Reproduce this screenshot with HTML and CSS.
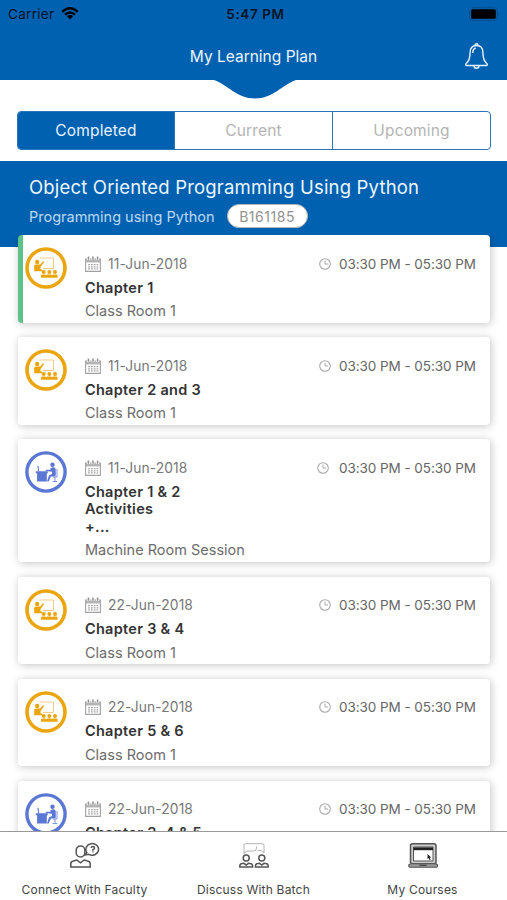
FILE: index.html
```html
<!DOCTYPE html>
<html lang="en">
<head>
<meta charset="utf-8">
<title>My Learning Plan</title>
<link rel="stylesheet" href="styles.css">
</head>
<body>
<svg class="sprite" aria-hidden="true">
  <symbol id="calendar" viewBox="0 0 16 16">
    <path d="M.6 3h14.8v12.4H.6z" fill="none" stroke="#a2a2a2" stroke-width="1.1"/>
    <path d="M1 3.2h14v3.3H1z" fill="#b4b4b4"/>
    <path d="M3.4.6v3.4M8 .6v3.4M12.6.6v3.4" stroke="#fff" stroke-width="2.8"/>
    <path d="M3.4.4v3.4M8 .4v3.4M12.6.4v3.4" stroke="#909090" stroke-width="1.5"/>
    <path d="M3.2 8.7h10M3.2 10.8h10M3.2 12.900h10" stroke="#a2a2a2" stroke-width="1.3" stroke-dasharray="1.700 1.100"/>
  </symbol>
  <symbol id="clock" viewBox="0 0 12 12">
    <circle cx="6" cy="6" r="5.3" fill="none" stroke="#aaa" stroke-width="1.1"/>
    <path d="M6 2.7V6h3" fill="none" stroke="#aaa" stroke-width="1"/>
  </symbol>
  <symbol id="classroom" viewBox="0 0 42 42">
    <circle cx="21" cy="21" r="19" fill="#fff" stroke="#eba50f" stroke-width="3.6"/>
    <path d="M14.5 11h14v10.5H18" fill="none" stroke="#f3cd87" stroke-width="1"/>
    <g fill="#eba50f">
      <circle cx="12.2" cy="15" r="2.2"/>
      <path d="M9.2 19q0-1.5 1.5-1.5H15l3.2-3.3.9.8-3.1 4.4-.5.3v2.8h1.7v1.8H9.2z"/>
      <circle cx="18.7" cy="25" r="2"/><circle cx="24.4" cy="25" r="2"/><circle cx="30" cy="25" r="2"/>
      <path d="M16 30.8v-2q0-1.4 1.4-1.4H20q1.2 0 1.2 1.2 0-1.2 1.3-1.2h3.3q1.3 0 1.3 1.2 0-1.2 1.2-1.2h2.9q1.4 0 1.4 1.4v2z"/>
    </g>
  </symbol>
  <symbol id="machine" viewBox="0 0 42 42">
    <circle cx="21" cy="21" r="19.1" fill="#fff" stroke="#5a77d4" stroke-width="3.4"/>
    <g fill="#5a77d4">
      <path d="M10.8 20.2h12v2h-1v8.3h-9.7v-8.3h-1.3z"/>
      <path d="M12.4 14.8h1.1l.7 5.2h-1.1z"/>
      <circle cx="27.5" cy="13.8" r="2.2"/>
      <path d="M25.5 17q4.7-1.7 5.2 1.2l.1 5.8q0 1.6-1.8 1.6h-3l-2.3 5h-1.7l2-6 3-1.7v-2.2l-6.2-.8v-1.2l4.7.1z"/>
    </g>
    <path d="M32 18v8h-4M30 26v4M27.5 30.5h4.8" fill="none" stroke="#7d94de"/>
  </symbol>
</svg>

<div class="app">
  <header class="header">
    <div class="status">
      <div class="carrier">
        <span>Carrier</span>
        <svg class="wifi" viewBox="0 0 18 13">
          <path d="M1.2 4.8Q9-2.2 16.8 4.8M4 7.7q5-4.4 10 0" fill="none" stroke="#000" stroke-width="2.3"/>
          <path d="M5.9 9.3q3.1-2.6 6.2 0L9 12.5z"/>
        </svg>
      </div>
      <span class="clock-time">5:47 PM</span>
      <svg class="battery" viewBox="0 0 32 14">
        <rect x=".7" y=".7" width="27.6" height="12.6" rx="3" fill="none" stroke="#064c8c"/>
        <rect x="2.2" y="2.2" width="24.6" height="9.6" rx="1.6"/>
        <path d="M29.6 5q1.8 2 0 4z" fill="#064c8c"/>
      </svg>
    </div>
    <div class="nav">
      <h1>My Learning Plan</h1>
      <svg class="bell" viewBox="0 0 24 28" fill="none" stroke="#e6f1fb" stroke-width="1.4">
        <path d="M12 3.500c-4.700 0-6.400 3.100-6.400 7 0 6.300-1.400 9-4.200 11.500-.5.7-.2 1.500.7 1.500h19.800c.9 0 1.200-.8.7-1.500-2.800-2.500-4.200-5.200-4.200-11.500C18.400 6.600 16.700 3.500 12 3.500z"/>
        <path d="M10.500 3.300a1.500 1.500 0 1 1 3 0M9.500 23.700a2.500 2.500 0 0 0 5 0M8.200 11c0-2.800.9-4.400 3-5"/>
      </svg>
    </div>
    <svg class="notch" viewBox="0 0 82 19"><path d="M0 0H82C68 5 59 18.500 41 18.500S14 5 0 0z" fill="#0061b1"/></svg>
  </header>

  <nav class="tabs">
    <span class="tab active">Completed</span>
    <span class="tab">Current</span>
    <span class="tab">Upcoming</span>
  </nav>

  <section class="banner">
    <h2>Object Oriented Programming Using Python</h2>
    <div class="course">
      <span class="course-name">Programming using Python</span>
      <span class="batch">B161185</span>
    </div>
  </section>

  <main class="list">
    <article class="card current">
      <svg class="badge"><use href="#classroom"/></svg>
      <div class="info">
        <div class="when"><svg class="cal"><use href="#calendar"/></svg><span class="date">11-Jun-2018</span><svg class="clock"><use href="#clock"/></svg><span class="time">03:30 PM - 05:30 PM</span></div>
        <h3>Chapter 1</h3>
        <p>Class Room 1</p>
      </div>
    </article>
    <article class="card">
      <svg class="badge"><use href="#classroom"/></svg>
      <div class="info">
        <div class="when"><svg class="cal"><use href="#calendar"/></svg><span class="date">11-Jun-2018</span><svg class="clock"><use href="#clock"/></svg><span class="time">03:30 PM - 05:30 PM</span></div>
        <h3>Chapter 2 and 3</h3>
        <p>Class Room 1</p>
      </div>
    </article>
    <article class="card lab">
      <svg class="badge"><use href="#machine"/></svg>
      <div class="info">
        <div class="when"><svg class="cal"><use href="#calendar"/></svg><span class="date">11-Jun-2018</span><svg class="clock"><use href="#clock"/></svg><span class="time">03:30 PM - 05:30 PM</span></div>
        <h3>Chapter 1 &amp; 2<br>Activities<br>+...</h3>
        <p>Machine Room Session</p>
      </div>
    </article>
    <article class="card">
      <svg class="badge"><use href="#classroom"/></svg>
      <div class="info">
        <div class="when"><svg class="cal"><use href="#calendar"/></svg><span class="date">22-Jun-2018</span><svg class="clock"><use href="#clock"/></svg><span class="time">03:30 PM - 05:30 PM</span></div>
        <h3>Chapter 3 &amp; 4</h3>
        <p>Class Room 1</p>
      </div>
    </article>
    <article class="card">
      <svg class="badge"><use href="#classroom"/></svg>
      <div class="info">
        <div class="when"><svg class="cal"><use href="#calendar"/></svg><span class="date">22-Jun-2018</span><svg class="clock"><use href="#clock"/></svg><span class="time">03:30 PM - 05:30 PM</span></div>
        <h3>Chapter 5 &amp; 6</h3>
        <p>Class Room 1</p>
      </div>
    </article>
    <article class="card">
      <svg class="badge"><use href="#machine"/></svg>
      <div class="info">
        <div class="when"><svg class="cal"><use href="#calendar"/></svg><span class="date">22-Jun-2018</span><svg class="clock"><use href="#clock"/></svg><span class="time">03:30 PM - 05:30 PM</span></div>
        <h3>Chapter 3, 4 &amp; 5</h3>
      </div>
    </article>
  </main>

  <footer class="bottom">
    <a class="action">
      <svg viewBox="0 0 32 28" fill="none" stroke="#555" stroke-width="1.5">
        <rect x="7.200" y="4" width="8.600" height="11" rx="4.200"/>
        <path d="M1.800 25v-3Q1.800 19.500 4.300 19l3.500-1 3.700 2.800L15.200 18l3.500 1q2.500.5 2.500 3v3z"/>
        <path d="M19.800 12.300l-3.600.6 1.600-2.400A6.400 5.800 0 1 1 19.800 12.300z"/>
        <path d="M22 5.800q.3-1.400 1.900-1.400t1.600 1.500q0 1.200-1.600 1.700v1.100M23.900 9.500v1"/>
      </svg>
      <span>Connect With Faculty</span>
    </a>
    <a class="action">
      <svg viewBox="0 0 32 28" fill="none" stroke="#555" stroke-width="1.500">
        <path d="M6 11.500V3q0-1.300 1.300-1.300h17.400Q26 1.700 26 3v8l-3-2.500h-3.500M6 11.500L9 9h6.500q3 0 3-3V4.500" stroke="#aaa" stroke-width=".9"/>
        <circle cx="8.200" cy="16" r="3"/><circle cx="23.800" cy="16" r="3"/>
        <path d="M1.800 25v-1q0-2.300 2.500-2.500l1.700-.2L8.200 23l2.200-1.700 1.700.2q2.500.2 2.500 2.500v1zM17.400 25v-1q0-2.300 2.500-2.500l1.700-.2 2.200 1.700 2.200-1.700 1.700.2q2.500.2 2.500 2.500v1z"/>
      </svg>
      <span>Discuss With Batch</span>
    </a>
    <a class="action">
      <svg viewBox="0 0 32 28" fill="none" stroke="#555" stroke-width="1.500">
        <rect x="3.500" y="1.800" width="25.500" height="20" rx="2" fill="#ccc"/>
        <path d="M6.500 5v14h19.500V5z" stroke-width="1" fill="#fff"/>
        <path d="M6.500 6.800H26" stroke="#222" stroke-width="2.800"/>
        <path d="M3.500 21.800L1.800 22.800v1.500q0 .9.900.9h26.900q.9 0 .9-.9v-1.500l-1.500-1z" fill="#999" stroke-width="1.100"/>
        <path d="M12.500 23.300h7" stroke="#444" stroke-width="1.300"/>
        <path d="M20.500 12v5l1.200-1 .9 2.200 1-.5-.9-2 1.500-.2z" fill="#222" stroke="none"/>
      </svg>
      <span>My Courses</span>
    </a>
  </footer>
</div>
</body>
</html>
```
FILE: styles.css
```css
* { box-sizing: border-box; }
body, h1, h2, h3, p { margin: 0; }
body {
  font-family: Inter, "Liberation Sans", sans-serif;
  background: #fff;
  color: #666;
}
.sprite { position: absolute; width: 0; height: 0; }
svg { display: block; flex: none; }
.app {
  width: 507px;
  height: 900px;
  display: flex;
  flex-direction: column;
  overflow: hidden;
}

.header {
  position: relative;
  flex: none;
  height: 80px;
  background: #0061b1;
}
.status {
  display: grid;
  grid-template-columns: 1fr auto 1fr;
  align-items: center;
  height: 27px;
  padding: 0 6px 0 8px;
  color: #001426;
  font-size: 13.5px;
}
.carrier { display: flex; align-items: center; gap: 7px; letter-spacing: .3px; }
.wifi { width: 18px; height: 13px; }
.clock-time { font-weight: 600; letter-spacing: .6px; padding-left: 2px; }
.battery { width: 32px; height: 14px; justify-self: end; }
.nav {
  display: grid;
  grid-template-columns: 1fr auto 1fr;
  align-items: center;
  height: 58px;
  padding-right: 18px;
  padding-left: 18px;
}
.nav h1 {
  grid-column: 2;
  color: #eef5fb;
  font-size: 15.5px;
  font-weight: 400;
  letter-spacing: 0;
}
.bell { width: 25px; height: 28px; justify-self: end; }
.notch {
  position: absolute;
  left: 214px;
  top: 79.5px;
  width: 82px;
  height: 19px;
}

.tabs {
  flex: none;
  display: flex;
  height: 39px;
  margin: 31px 16px 11px 17px;
  border: 1px solid #2b74b8;
  border-radius: 4px;
  overflow: hidden;
}
.tab {
  flex: 1;
  display: flex;
  align-items: center;
  justify-content: center;
  border-left: 1px solid #2b74b8;
  color: #b4b4b4;
  font-size: 15.5px;
  letter-spacing: .15px;
}
.tab:first-child { flex: 0 0 156px; border-left: 0; }
.tab.active { background: #0061b1; color: #e8f2fb; }

.banner {
  flex: none;
  height: 86px;
  padding: 14px 29px 0;
  background: #0061b1;
}
.banner h2 {
  color: #eef6fd;
  font-size: 18.5px;
  line-height: 24px;
  font-weight: 400;
  letter-spacing: .18px;
  white-space: nowrap;
}
.course { display: flex; align-items: center; gap: 12px; margin-top: 5px; }
.course-name { color: #bcd8f0; font-size: 14.5px; }
.batch {
  width: 81px;
  height: 24px;
  border: 1px solid #b5b5b5;
  border-radius: 12px;
  background: #fff;
  color: #929292;
  font-size: 14px;
  line-height: 23px;
  letter-spacing: .55px;
  text-align: center;
}

.list {
  flex: 1;
  min-height: 0;
  display: flex;
  flex-direction: column;
  gap: 14.7px;
  margin-top: -12px;
  padding: 0 17px 0 18px;
  overflow: hidden;
}
.card {
  flex: none;
  display: flex;
  gap: 18px;
  padding: 12px 14px 2.5px 7px;
  border-radius: 4px;
  background: #fff;
  box-shadow: 1px 1px 8px rgba(0, 0, 0, .24);
}
.card.current {
  padding-left: 2px;
  border-left: 5px solid #5bc28a;
}
.badge { width: 42px; height: 42px; }
.info { flex: 1; padding-top: 7.5px; }
.when { display: flex; align-items: center; height: 18px; }
.cal { width: 16px; height: 16px; margin-right: 7px; }
.date { color: #777; font-size: 13.8px; letter-spacing: .1px; }
.clock { width: 12px; height: 12px; margin-left: auto; margin-right: 8px; }
.lab .clock { margin-right: 10px; }
.time { width: 137px; white-space: nowrap; color: #666; font-size: 13.5px; letter-spacing: -.06px; }
.info h3 {
  margin-top: 6px;
  color: #333;
  font-size: 14.5px;
  line-height: 17.5px;
  font-weight: 600;
  letter-spacing: .28px;
}
.info p {
  margin-top: 6px;
  font-size: 14.5px;
  line-height: 18px;
  color: #6c6c6c;
}

.bottom {
  position: relative;
  flex: none;
  display: flex;
  height: 69px;
  border-top: 1px solid #999;
  background: #fff;
}
.action {
  flex: 1;
  display: flex;
  flex-direction: column;
  align-items: center;
  padding-top: 10px;
  color: #444;
  font-size: 12px;
  letter-spacing: .2px;
}
.action svg { width: 32px; height: 28px; }
.action span { margin-top: 12px; line-height: 16px; }
```
